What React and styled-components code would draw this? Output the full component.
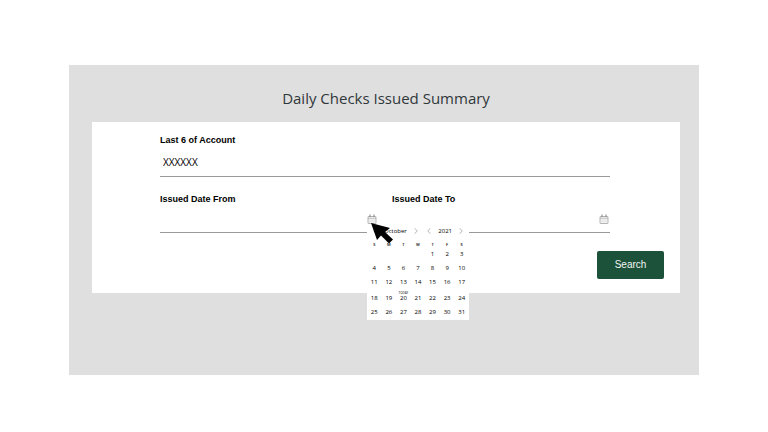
import React from "react"
import styled, { createGlobalStyle } from "styled-components"

const weekdays = ["S", "M", "T", "W", "T", "F", "S"]
const weeks = [
  ["", "", "", "", 1, 2, 3],
  [4, 5, 6, 7, 8, 9, 10],
  [11, 12, 13, 14, 15, 16, 17],
  [18, 19, 20, 21, 22, 23, 24],
  [25, 26, 27, 28, 29, 30, 31],
]
const today = 20

const CalendarIcon = () => (
  <svg width="10" height="10" viewBox="0 0 20 20" fill="none" aria-hidden="true">
    <rect x="2" y="5" width="16" height="14" rx="1" fill="#f4f4f4" stroke="#969696" strokeWidth="1.4" />
    <path d="M2 8.5h16" stroke="#a0a0a0" strokeWidth="1.2" />
    <path d="M6 1v5M14 1v5" stroke="#808080" strokeWidth="2" />
    <path d="M5 12h10M5 15.5h10" stroke="#c8c8c8" strokeWidth="1.4" strokeDasharray="2 2" />
  </svg>
)

const Chevron = ({ back }) => (
  <svg width="4" height="6" viewBox="0 0 4 6" fill="none" aria-hidden="true">
    <path d={back ? "M3.5 .3L.7 3l2.8 2.7" : "M.5 .3L3.3 3 .5 5.7"} stroke="#858585" strokeWidth=".6" />
  </svg>
)

const Stepper = ({ label, value }) => (
  <StepperGroup>
    <IconButton type="button" aria-label={`Previous ${label}`}>
      <Chevron back />
    </IconButton>
    <span>{value}</span>
    <IconButton type="button" aria-label={`Next ${label}`}>
      <Chevron />
    </IconButton>
  </StepperGroup>
)

const Calendar = () => (
  <Popup>
    <PopupHeader>
      <Stepper label="month" value="October" />
      <Stepper label="year" value="2021" />
    </PopupHeader>
    <MonthTable>
      <thead>
        <tr>
          {weekdays.map((day, i) => (
            <th key={i}>{day}</th>
          ))}
        </tr>
      </thead>
      <tbody>
        {weeks.map((week, i) => (
          <Week key={i} $current={week.includes(today)}>
            {week.map((day, j) => (
              <td key={j}>
                {day === today && <Today>TODAY</Today>}
                {day}
              </td>
            ))}
          </Week>
        ))}
      </tbody>
    </MonthTable>
  </Popup>
)

const DateField = ({ id, label, children }) => (
  <Field>
    <Label htmlFor={id}>{label}</Label>
    <InputRow>
      <Input id={id} type="text" />
      <Picker>
        <IconButton type="button" aria-label={`Pick ${label}`}>
          <CalendarIcon />
        </IconButton>
        {children}
      </Picker>
    </InputRow>
  </Field>
)

const App = () => {
  return (
    <Page>
      <GlobalStyle />
      <Panel>
        <Title>Daily Checks Issued Summary</Title>
        <Card>
          <Fields>
            <Field $gap="3px">
              <Label htmlFor="account">Last 6 of Account</Label>
              <InputRow>
                <Input id="account" type="text" defaultValue="XXXXXX" />
              </InputRow>
            </Field>
            <DateRow>
              <DateField id="from" label="Issued Date From">
                <Calendar />
                <Cursor viewBox="0 0 22 21" aria-hidden="true">
                  <path d="M0 0L19 5 14 9 22 16.5 18 20.5 10 12.5 6 17z" />
                </Cursor>
              </DateField>
              <DateField id="to" label="Issued Date To" />
            </DateRow>
          </Fields>
          <SearchButton type="button">Search</SearchButton>
        </Card>
      </Panel>
    </Page>
  )
}

const GlobalStyle = createGlobalStyle`
  * {
    box-sizing: border-box;
  }

  body {
    margin: 0;
    background: #fff;
    color: #111;
    font-family: "Liberation Sans", Arial, sans-serif;
  }
`

const Page = styled.main`
  padding: 65px 69px 0;
`

const Panel = styled.section`
  padding: 19px 19px 82px 23px;
  background: #dfdfdf;
`

const Title = styled.h1`
  margin: 0 0 10px;
  color: #30373a;
  font: 400 15px/28px "Open Sans", sans-serif;
  text-align: center;
`

const Card = styled.form`
  display: flex;
  flex-direction: column;
  padding: 12px 16px 14px 68px;
  background: #fff;
`

const Fields = styled.div`
  display: flex;
  flex-direction: column;
  gap: 16px;
  margin-right: 54px;
`

const DateRow = styled.div`
  display: grid;
  grid-template-columns: 1fr 1fr;
  gap: 14px;
`

const Field = styled.div`
  display: flex;
  flex-direction: column;
  gap: ${({ $gap }) => $gap || "0"};
`

const Label = styled.label`
  color: #000;
  font-size: 9px;
  font-weight: 700;
  line-height: 12px;
`

const InputRow = styled.div`
  display: flex;
  align-items: center;
  height: 28px;
  padding-right: 1px;
  border-bottom: 1px solid #999;
`

const Input = styled.input`
  flex: 1;
  min-width: 0;
  padding: 0 3px 2px;
  border: 0;
  outline: 0;
  background: transparent;
  color: #000;
  font: 400 10px/14px "Open Sans", sans-serif;
`

const Picker = styled.div`
  position: relative;
`

const IconButton = styled.button`
  display: flex;
  align-items: center;
  justify-content: center;
  padding: 0;
  border: 0;
  background: none;
`

const Popup = styled.div`
  position: absolute;
  z-index: 1;
  top: 100%;
  left: 0;
  width: 102px;
  padding-bottom: 1px;
  background: #fff;
  color: #000;
  font-family: "Open Sans", sans-serif;
`

const PopupHeader = styled.div`
  display: flex;
  justify-content: space-between;
  padding: 0 6px;
`

const StepperGroup = styled.div`
  display: flex;
  align-items: center;
  gap: 7px;
  font-size: 6px;
  line-height: 14px;
`

const MonthTable = styled.table`
  width: 100%;
  table-layout: fixed;
  border-collapse: collapse;
  text-align: center;

  th {
    height: 9px;
    padding: 0;
    font-size: 4px;
    font-weight: 600;
    line-height: 4px;
    vertical-align: bottom;
  }
`

const Week = styled.tr`
  td {
    position: relative;
    height: ${({ $current }) => ($current ? "16px" : "14px")};
    padding: 0;
    font-size: 6px;
    line-height: 14px;
    vertical-align: bottom;
  }
`

const Today = styled.span`
  position: absolute;
  top: 2px;
  left: 0;
  right: 0;
  font-size: 3px;
  line-height: 4px;
`

const Cursor = styled.svg`
  position: absolute;
  z-index: 2;
  top: 9px;
  left: 4px;
  width: 22px;
  height: 21px;
  fill: #000;
`

const SearchButton = styled.button`
  align-self: flex-end;
  width: 67px;
  height: 28px;
  margin-top: 18px;
  padding: 0;
  border: 0;
  border-radius: 2px;
  background: #1d523a;
  color: #f1f6f3;
  font: 400 10px/14px "Liberation Sans", Arial, sans-serif;
`

export default App
